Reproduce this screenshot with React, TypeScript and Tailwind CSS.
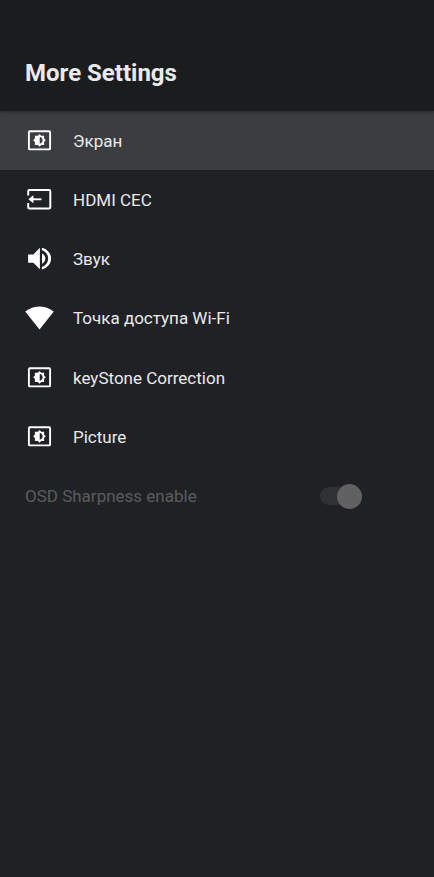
import React, { useState } from 'react';

const BrightnessIcon: React.FC = () => (
  <svg className="w-[30px] h-[30px]" viewBox="0 0 30 30" fill="none" aria-hidden="true">
    <rect x="3.9" y="5.2" width="21.2" height="18.2" rx="1" stroke="currentColor" strokeWidth="1.9" />
    <path
      transform="translate(.7 .5) scale(1.15)"
      fill="currentColor"
      d="M8 16h2.5l1.5 1.5 1.5-1.5H16v-2.5l1.5-1.5-1.5-1.5V8h-2.5L12 6.5 10.5 8H8v2.5L6.5 12 8 13.5V16zm4.2-6.9c1.4 0 2.5 1.3 2.5 2.9s-1.1 2.900-2.5 2.900V9.100z"
    />
  </svg>
);

const InputIcon: React.FC = () => (
  <svg className="w-[30px] h-[30px]" viewBox="0 0 30 30" fill="none" aria-hidden="true">
    <path
      d="M3.2 10.5V6.4q0-1.3 1.3-1.3h19.5q1.3 0 1.3 1.3v15.8q0 1.3-1.3 1.3H4.5q-1.3 0-1.3-1.3V18.1"
      stroke="currentColor"
      strokeWidth="2"
    />
    <path d="M8 14.3h8.5" stroke="currentColor" strokeWidth="1.9" />
    <path d="M3.4 14.3l5-4v8z" fill="currentColor" />
  </svg>
);

const VolumeIcon: React.FC = () => (
  <svg className="w-[30px] h-[30px]" viewBox="0 0 24 24" fill="currentColor" aria-hidden="true">
    <path d="M2.5 8.3v6.6h4.2l5.2 5.3V3L6.7 8.3H2.5zM16.3 11.6c0-1.8-1.1-3.3-2.7-4.1v8.2c1.6-.8 2.7-2.3 2.7-4.1zM13.5 2.9v2c2.9.8 5 3.5 5 6.7s-2.1 5.9-5 6.7v2c4.2-.9 7.4-4.5 7.4-8.7s-3.2-7.8-7.4-8.7z" />
  </svg>
);

const WifiIcon: React.FC = () => (
  <svg className="w-[30px] h-[30px]" viewBox="0 0 30 30" fill="currentColor" aria-hidden="true">
    <path d="M14.5 26.5L28.8 8.5C28.2 8.1 22.7 3.4 14.5 3.4S.8 8.1.2 8.5l14.3 18z" />
  </svg>
);

const items = [
  { label: 'Экран', Icon: BrightnessIcon },
  { label: 'HDMI CEC', Icon: InputIcon },
  { label: 'Звук', Icon: VolumeIcon },
  { label: 'Точка доступа Wi-Fi', Icon: WifiIcon },
  { label: 'keyStone Correction', Icon: BrightnessIcon },
  { label: 'Picture', Icon: BrightnessIcon },
];

const App: React.FC = () => {
  const [selected, setSelected] = useState(0);

  return (
    <div className="min-h-screen bg-[#202124] font-['Roboto',sans-serif] text-[#e8eaed]">
      <header className="relative bg-[#1b1c1e] px-[25px] pt-[57px] pb-[22px] shadow-[0_1px_3px_rgba(0,0,0,0.4)]">
        <h1 className="text-2xl font-bold">More Settings</h1>
      </header>

      <main className="grid auto-rows-fr min-h-[415px] text-[17px] leading-6">
        {items.map(({ label, Icon }, index) => (
          <button
            key={label}
            type="button"
            onClick={() => setSelected(index)}
            className={`flex items-center gap-[18px] px-[25px] text-left ${index === selected ? 'bg-[#3c3d40]' : 'bg-transparent'}`}
          >
            <span className="text-white">
              <Icon />
            </span>
            {label}
          </button>
        ))}

        {/* Sharpness switch, not available on this device */}
        <label className="flex items-center justify-between pl-[25px] pr-[72px] text-[#5b5c5e]">
          OSD Sharpness enable
          <span className="flex items-center">
            <input type="checkbox" role="switch" className="sr-only" defaultChecked disabled />
            <span className="flex h-[18px] w-[42px] items-center justify-end rounded-full bg-[#303135]">
              <span className="h-[25px] w-[25px] rounded-full bg-[#616161]" />
            </span>
          </span>
        </label>
      </main>
    </div>
  );
};

export default App;
